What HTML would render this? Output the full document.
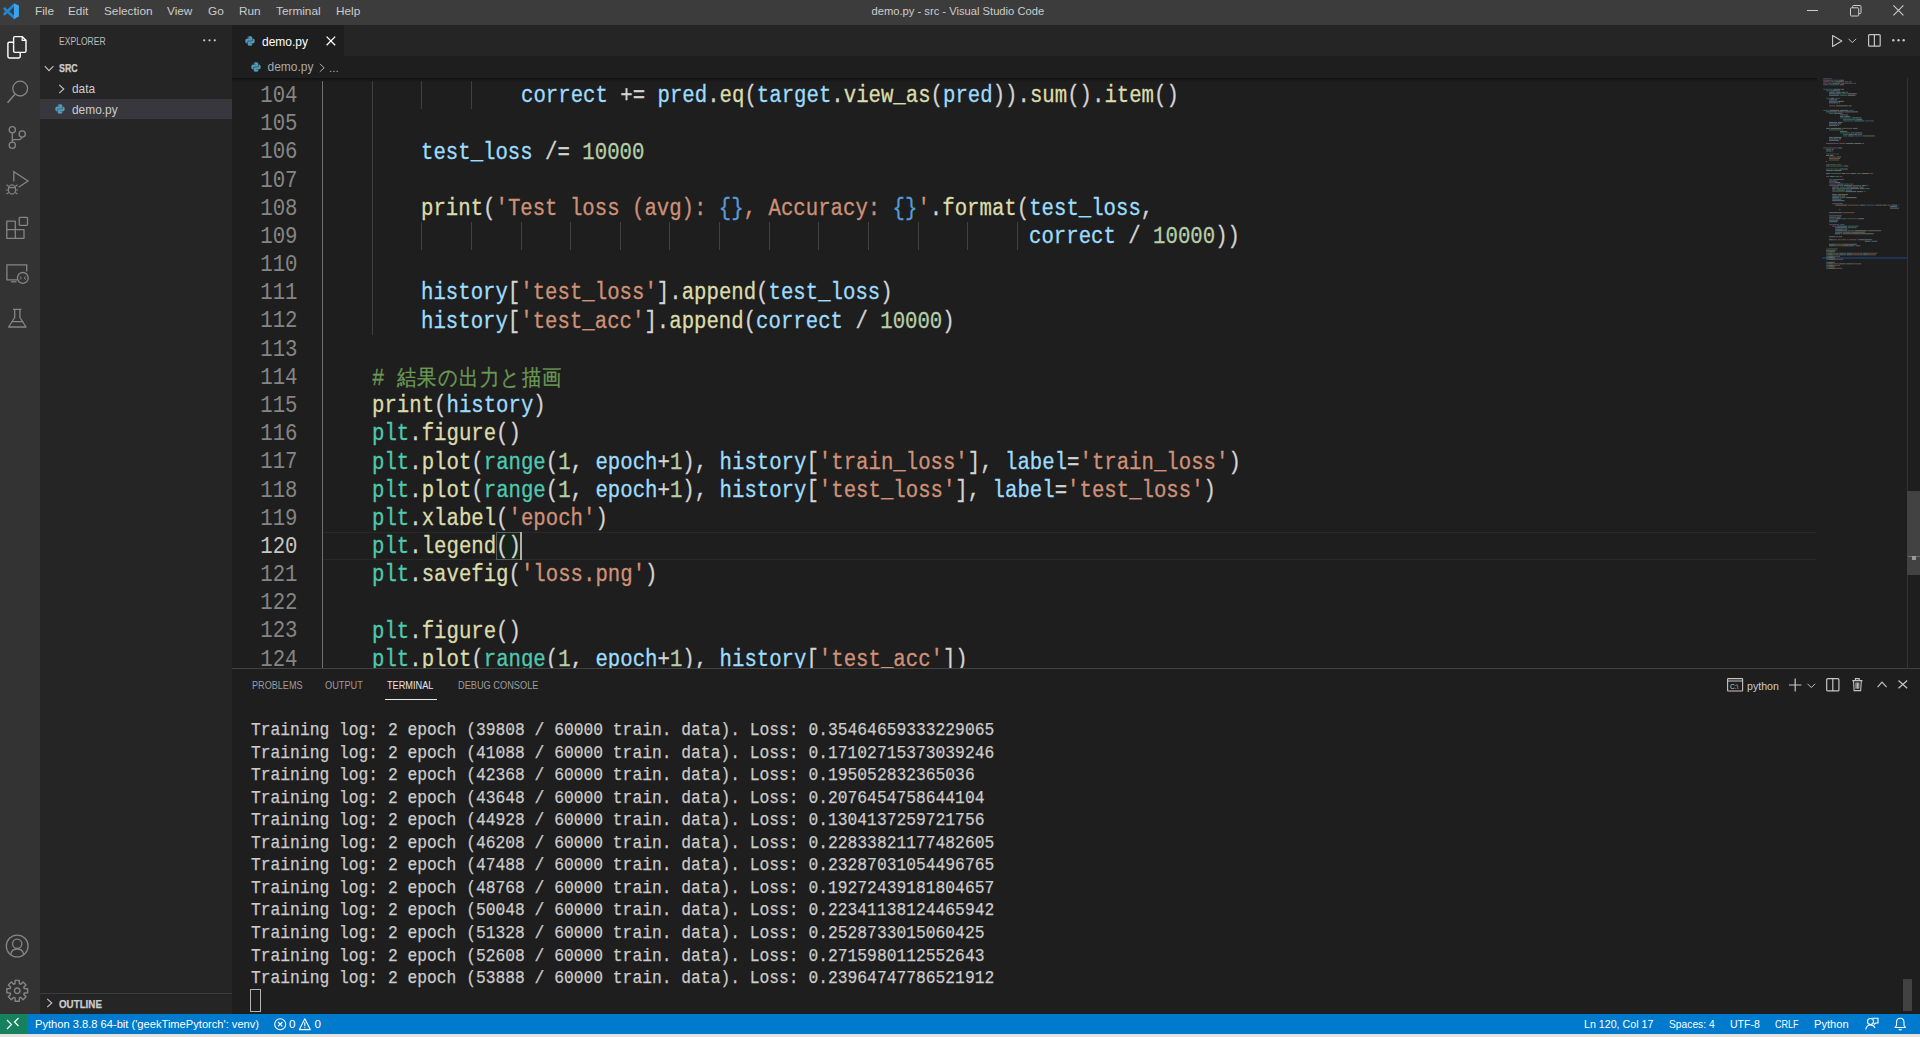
<!DOCTYPE html>
<html><head><meta charset="utf-8">
<style>
*{margin:0;padding:0;box-sizing:border-box}
html,body{width:1920px;height:1037px;overflow:hidden;background:#1e1e1e;font-family:"Liberation Sans",sans-serif}
.a{position:absolute}
#title{left:0;top:0;width:1920px;height:25px;background:#3c3c3c}
.menu{position:absolute;top:3px;font-size:11.8px;color:#cccccc;line-height:16px;white-space:nowrap}
#activity{left:0;top:25px;width:40px;height:989px;background:#333333}
#sidebar{left:40px;top:25px;width:192px;height:989px;background:#252526}
#tabs{left:232px;top:25px;width:1688px;height:31px;background:#252526}
#tab{left:232px;top:25px;width:112px;height:31px;background:#1e1e1e}
#crumbs{left:232px;top:56px;width:1688px;height:22px;background:#1e1e1e}
#status{left:0;top:1014px;width:1920px;height:20px;background:#007acc}
#strip{left:0;top:1034px;width:1920px;height:3px;background:#e6e3df}
.ln{position:absolute;left:220px;width:77.5px;height:28.18px;line-height:28.18px;padding-top:0.8px;text-align:right;font-family:"Liberation Mono",monospace;font-size:23.5px;color:#858585;transform:scaleX(0.88);transform-origin:100% 0;white-space:pre}
.ln.act{color:#c6c6c6}
.ig{position:absolute;width:1px;height:28.18px;background:#404040}
.ig.iga{background:#707070}
.cl{position:absolute;height:28.18px;line-height:28.18px;padding-top:1px;font-family:"Liberation Mono",monospace;font-size:23.5px;color:#d4d4d4;transform:scaleX(0.88);transform-origin:0 0;white-space:pre;-webkit-text-stroke:0.3px currentColor}
.cjk{font-family:"Liberation Sans",sans-serif;color:#6a9955;font-size:22px;letter-spacing:1.3px}
.tl{position:absolute;left:251px;height:22.55px;line-height:22.55px;font-family:"Liberation Mono",monospace;font-size:19px;color:#cccccc;transform:scaleX(0.8577);transform-origin:0 0;white-space:pre;-webkit-text-stroke:0.25px currentColor}
.ui{position:absolute;white-space:nowrap;line-height:16px}
svg{position:absolute;overflow:visible}
</style></head><body>
<div id="title" class="a"></div>
<!-- vscode logo -->
<svg style="left:0;top:0.8px" width="22" height="22" viewBox="0 0 22 22">
<path d="M4.6 7.8 L14.4 16.8 M4.6 13 L14.4 3.6" stroke="#1f88d6" stroke-width="2.7" stroke-linecap="round"/>
<path d="M13.9 3.1 L14.9 2.7 L18.9 4.6 V15.5 L14.9 17.6 L13.9 17.2 Z" fill="#3aa5ee"/>
</svg>
<div class="menu" style="left:35px">File</div>
<div class="menu" style="left:68px">Edit</div>
<div class="menu" style="left:104px">Selection</div>
<div class="menu" style="left:167px">View</div>
<div class="menu" style="left:208px">Go</div>
<div class="menu" style="left:239px">Run</div>
<div class="menu" style="left:276px">Terminal</div>
<div class="menu" style="left:336px">Help</div>
<div class="menu" style="left:871.5px;font-size:11.2px">demo.py - src - Visual Studio Code</div>
<!-- window controls -->
<svg style="left:1807px;top:9.7px" width="12" height="2"><rect x="0" y="0" width="11" height="1" fill="#cccccc"/></svg>
<svg style="left:1850px;top:4.7px" width="12" height="12" viewBox="0 0 12 12"><rect x="0.5" y="2.8" width="8.2" height="8.2" rx="0.8" fill="none" stroke="#cccccc"/><path d="M2.7 2.8 V1.3 Q2.7 0.5 3.5 0.5 H10.2 Q11 0.5 11 1.3 V7.8 Q11 8.6 10.2 8.6 H8.7" fill="none" stroke="#cccccc"/></svg>
<svg style="left:1893px;top:4.5px" width="11" height="11" viewBox="0 0 11 11"><path d="M0.4 0.4 L10.4 10.3 M10.4 0.4 L0.4 10.3" stroke="#cccccc" stroke-width="1.1"/></svg>

<div id="activity" class="a"></div>
<!-- activity icons -->
<svg style="left:0;top:30px" width="40" height="35" viewBox="0 30 40 35">
 <path d="M13.6 44.5 V38 Q13.6 36.6 15 36.6 H22.2 L26 40.4 V51 Q26 52.4 24.6 52.4 H20.5" fill="none" stroke="#fff" stroke-width="1.4"/>
 <path d="M13.6 44.5 V51 Q13.6 52.4 15 52.4 H20.5" fill="none" stroke="#fff" stroke-width="1.4"/>
 <path d="M22.2 36.6 V40.4 H26" fill="none" stroke="#fff" stroke-width="1.2"/>
 <path d="M13.6 42.2 H9.3 Q7.9 42.2 7.9 43.6 V56.6 Q7.9 58 9.3 58 H18.8 Q20.2 58 20.2 56.6 V52.4" fill="none" stroke="#fff" stroke-width="1.4"/>
</svg>
<svg style="left:0;top:75px" width="40" height="35" viewBox="0 75 40 35">
 <circle cx="20.2" cy="88.6" r="7.4" fill="none" stroke="#858585" stroke-width="1.3"/>
 <path d="M15 94.3 L7.5 102.7" stroke="#858585" stroke-width="1.5"/>
</svg>
<svg style="left:0;top:120px" width="40" height="35" viewBox="0 120 40 35">
 <circle cx="12.3" cy="129.8" r="3.1" fill="none" stroke="#858585" stroke-width="1.3"/>
 <circle cx="22.2" cy="134" r="3.1" fill="none" stroke="#858585" stroke-width="1.3"/>
 <circle cx="12.3" cy="145.3" r="3.1" fill="none" stroke="#858585" stroke-width="1.3"/>
 <path d="M12.3 132.9 V142.2 M12.3 141 Q12.3 139.6 14 139.6 H19 Q21.5 139.6 22 137" fill="none" stroke="#858585" stroke-width="1.3"/>
</svg>
<svg style="left:0;top:165px" width="40" height="35" viewBox="0 165 40 35">
 <path d="M13.8 181.5 V171.8 L28 181 L18.6 187.3" fill="none" stroke="#858585" stroke-width="1.3" stroke-linejoin="miter"/>
 <ellipse cx="12" cy="189.5" rx="3.6" ry="4.6" fill="none" stroke="#858585" stroke-width="1.2"/>
 <path d="M8.4 187.6 H15.6 M6.5 184.8 L8.8 186.5 M17.5 184.8 L15.2 186.5 M6 190 H8.4 M15.6 190 H18 M6.5 194 L8.8 192.5 M17.5 194 L15.2 192.5" stroke="#858585" stroke-width="1.1"/>
</svg>
<svg style="left:0;top:212px" width="40" height="35" viewBox="0 212 40 35">
 <path d="M6.8 221.2 H15.3 V238.3 H6.8 Z M6.8 229.7 H24 V238.3 H15.3" fill="none" stroke="#858585" stroke-width="1.3" stroke-linejoin="round"/>
 <rect x="19.2" y="217.4" width="8.3" height="8" rx="0.8" fill="none" stroke="#858585" stroke-width="1.3"/>
</svg>
<svg style="left:0;top:257px" width="40" height="35" viewBox="0 257 40 35">
 <path d="M17 279.8 H6.9 V264.8 H26.7 V271.5" fill="none" stroke="#858585" stroke-width="1.3"/>
 <path d="M11 281.8 H16.5" stroke="#858585" stroke-width="1.3"/>
 <circle cx="22.8" cy="277.9" r="5.4" fill="none" stroke="#858585" stroke-width="1.3"/>
 <path d="M19.6 276.4 L21.6 278 L19.6 279.6 M26 276.4 L24 278 L26 279.6" fill="none" stroke="#858585" stroke-width="0.9"/>
</svg>
<svg style="left:0;top:302px" width="40" height="35" viewBox="0 302 40 35">
 <path d="M13 309.4 H21.5 M14.7 309.4 V317.5 L8.6 327 H26 L19.9 317.5 V309.4 M11.2 321.6 H23.5" fill="none" stroke="#858585" stroke-width="1.3" stroke-linejoin="round"/>
</svg>
<svg style="left:0;top:930px" width="40" height="80" viewBox="0 930 40 80">
 <circle cx="17.2" cy="946" r="10.9" fill="none" stroke="#858585" stroke-width="1.3"/>
 <circle cx="17.2" cy="943.8" r="4.6" fill="none" stroke="#858585" stroke-width="1.3"/>
 <path d="M10.8 953.8 Q12 949 17.2 949 Q22.4 949 23.6 953.8" fill="none" stroke="#858585" stroke-width="1.3"/>
 <g transform="translate(17.2 990.8)">
 <path d="M-2.16 -7.08 L-2.11 -10.39 L2.11 -10.39 L2.16 -7.08 L3.47 -6.53 L5.85 -8.84 L8.84 -5.85 L6.53 -3.47 L7.08 -2.16 L10.39 -2.11 L10.39 2.11 L7.08 2.16 L6.53 3.47 L8.84 5.85 L5.85 8.84 L3.47 6.53 L2.16 7.08 L2.11 10.39 L-2.11 10.39 L-2.16 7.08 L-3.47 6.53 L-5.85 8.84 L-8.84 5.85 L-6.53 3.47 L-7.08 2.16 L-10.39 2.11 L-10.39 -2.11 L-7.08 -2.16 L-6.53 -3.47 L-8.84 -5.85 L-5.85 -8.84 L-3.47 -6.53 Z" fill="none" stroke="#858585" stroke-width="1.4" stroke-linejoin="round"/>
 <circle cx="0" cy="0" r="2.8" fill="none" stroke="#858585" stroke-width="1.4"/>
 </g>
</svg>

<div id="sidebar" class="a"></div>
<div class="ui" style="left:58.5px;top:33px;font-size:10.6px;color:#bbbbbb;transform:scaleX(0.81);transform-origin:0 0">EXPLORER</div>
<svg style="left:203px;top:39px" width="14" height="3"><circle cx="1.2" cy="1.3" r="1.1" fill="#cccccc"/><circle cx="6.5" cy="1.3" r="1.1" fill="#cccccc"/><circle cx="11.8" cy="1.3" r="1.1" fill="#cccccc"/></svg>
<svg style="left:44px;top:64.6px" width="11" height="8" viewBox="0 0 11 8"><path d="M0.8 1.2 L5 5.6 L9.4 1.2" fill="none" stroke="#c5c5c5" stroke-width="1.1"/></svg>
<div class="ui" style="left:58.5px;top:61px;font-size:10.3px;font-weight:bold;color:#cccccc;transform:scaleX(0.86);transform-origin:0 0;-webkit-text-stroke:0.25px #cccccc">SRC</div>
<svg style="left:58px;top:84px" width="8" height="11" viewBox="0 0 8 11"><path d="M1.2 0.8 L5.8 5 L1.2 9.2" fill="none" stroke="#c5c5c5" stroke-width="1.1"/></svg>
<div class="ui" style="left:72px;top:80.7px;font-size:11.9px;color:#cccccc">data</div>
<div class="a" style="left:40px;top:99px;width:192px;height:20px;background:#37373d"></div>
<svg style="left:55px;top:104px" width="10" height="10" viewBox="0 0 10 10" id="py1"><path d="M4.9 0.3 C2.6 0.3 2.7 1.3 2.7 1.3 V2.4 H5 V2.8 H1.8 C1.8 2.8 0.3 2.6 0.3 5 C0.3 7.3 1.6 7.2 1.6 7.2 H2.4 V6.1 C2.4 6.1 2.3 4.8 3.7 4.8 H6 C6 4.8 7.3 4.8 7.3 3.5 V1.5 C7.3 1.5 7.5 0.3 4.9 0.3 Z M3.6 1 A0.4 0.4 0 1 1 3.6 1.8 A0.4 0.4 0 1 1 3.6 1" fill="#519aba"/><path d="M5.1 9.7 C7.4 9.7 7.3 8.7 7.3 8.7 V7.6 H5 V7.2 H8.2 C8.2 7.2 9.7 7.4 9.7 5 C9.7 2.7 8.4 2.8 8.4 2.8 H7.6 V3.9 C7.6 3.9 7.7 5.2 6.3 5.2 H4 C4 5.2 2.7 5.2 2.7 6.5 V8.5 C2.7 8.5 2.5 9.7 5.1 9.7 Z" fill="#519aba"/></svg>
<div class="ui" style="left:72px;top:101.5px;font-size:11.9px;color:#cccccc">demo.py</div>
<div class="a" style="left:40px;top:993px;width:192px;height:1px;background:#3c3c3c"></div>
<svg style="left:46px;top:998px" width="8" height="11" viewBox="0 0 8 11"><path d="M1.2 0.8 L5.8 5 L1.2 9.2" fill="none" stroke="#c5c5c5" stroke-width="1.1"/></svg>
<div class="ui" style="left:58.5px;top:997px;font-size:10.3px;font-weight:bold;color:#cccccc;transform:scaleX(0.95);transform-origin:0 0;-webkit-text-stroke:0.25px #cccccc">OUTLINE</div>

<!-- editor -->
<div id="tabs" class="a"></div>
<div id="tab" class="a"></div>
<svg style="left:245px;top:35.5px" width="10" height="10" viewBox="0 0 10 10"><use href="#py1"/></svg>
<div class="ui" style="left:262px;top:33.8px;font-size:12px;color:#ffffff">demo.py</div>
<svg style="left:326px;top:36px" width="10" height="10" viewBox="0 0 10 10"><path d="M0.6 0.6 L9.2 9.2 M9.2 0.6 L0.6 9.2" stroke="#ffffff" stroke-width="1.3"/></svg>
<!-- editor actions -->
<svg style="left:1832px;top:35px" width="11" height="13" viewBox="0 0 11 13"><path d="M0.6 0.6 L9.8 6 L0.6 11.4 Z" fill="none" stroke="#c5c5c5" stroke-width="1.15" stroke-linejoin="round"/></svg>
<svg style="left:1848px;top:38px" width="9" height="6" viewBox="0 0 9 6"><path d="M0.5 0.8 L4.3 4.6 L8.1 0.8" fill="none" stroke="#c5c5c5" stroke-width="1"/></svg>
<svg style="left:1868px;top:34px" width="13" height="13" viewBox="0 0 13 13"><rect x="0.6" y="0.6" width="11.6" height="11.6" rx="0.9" fill="none" stroke="#c5c5c5" stroke-width="1.2"/><path d="M6.4 0.6 V12.2" stroke="#c5c5c5" stroke-width="1.2"/></svg>
<svg style="left:1892px;top:39px" width="13" height="3"><circle cx="1.3" cy="1.3" r="1.2" fill="#c5c5c5"/><circle cx="6.5" cy="1.3" r="1.2" fill="#c5c5c5"/><circle cx="11.7" cy="1.3" r="1.2" fill="#c5c5c5"/></svg>

<div id="crumbs" class="a"></div>
<svg style="left:250.5px;top:62px" width="10" height="10" viewBox="0 0 10 10"><use href="#py1"/></svg>
<div class="ui" style="left:267.5px;top:59px;font-size:12px;color:#a9a9a9">demo.py</div>
<svg style="left:319px;top:62.5px" width="7" height="10" viewBox="0 0 7 10"><path d="M0.8 0.8 L5.2 4.8 L0.8 8.8" fill="none" stroke="#a9a9a9" stroke-width="1"/></svg>
<div class="ui" style="left:329px;top:59.5px;font-size:11.6px;color:#a9a9a9">...</div>

<!-- current line highlight -->
<div class="a" style="left:322px;top:532.3px;width:1495px;height:27.5px;border-top:1px solid #282828;border-bottom:1px solid #282828"></div>
<!-- bracket match -->
<div class="a" style="left:495.5px;top:532.3px;width:26px;height:27.8px;background:#15251a;border:1px solid #5c5c5c"></div>

<div class="a" style="left:0;top:0;width:1817px;height:668px;overflow:hidden">
<div class="ln" style="top:81.20px">104</div>
<div class="ig iga" style="left:322.00px;top:81.20px"></div>
<div class="ig" style="left:371.64px;top:81.20px"></div>
<div class="ig" style="left:421.28px;top:81.20px"></div>
<div class="ig" style="left:470.92px;top:81.20px"></div>
<div class="cl" style="left:520.56px;top:81.20px"><span style="color:#9cdcfe">correct</span><span style="color:#d4d4d4"> += </span><span style="color:#9cdcfe">pred</span><span style="color:#d4d4d4">.</span><span style="color:#dcdcaa">eq</span><span style="color:#d4d4d4">(</span><span style="color:#9cdcfe">target</span><span style="color:#d4d4d4">.</span><span style="color:#dcdcaa">view_as</span><span style="color:#d4d4d4">(</span><span style="color:#9cdcfe">pred</span><span style="color:#d4d4d4">))</span><span style="color:#d4d4d4">.</span><span style="color:#dcdcaa">sum</span><span style="color:#d4d4d4">().</span><span style="color:#dcdcaa">item</span><span style="color:#d4d4d4">()</span></div>
<div class="ln" style="top:109.38px">105</div>
<div class="ig iga" style="left:322.00px;top:109.38px"></div>
<div class="ig" style="left:371.64px;top:109.38px"></div>
<div class="ln" style="top:137.56px">106</div>
<div class="ig iga" style="left:322.00px;top:137.56px"></div>
<div class="ig" style="left:371.64px;top:137.56px"></div>
<div class="cl" style="left:421.28px;top:137.56px"><span style="color:#9cdcfe">test_loss</span><span style="color:#d4d4d4"> /= </span><span style="color:#b5cea8">10000</span></div>
<div class="ln" style="top:165.74px">107</div>
<div class="ig iga" style="left:322.00px;top:165.74px"></div>
<div class="ig" style="left:371.64px;top:165.74px"></div>
<div class="ln" style="top:193.92px">108</div>
<div class="ig iga" style="left:322.00px;top:193.92px"></div>
<div class="ig" style="left:371.64px;top:193.92px"></div>
<div class="cl" style="left:421.28px;top:193.92px"><span style="color:#dcdcaa">print</span><span style="color:#d4d4d4">(</span><span style="color:#ce9178">&#x27;Test loss (avg): </span><span style="color:#569cd6">{}</span><span style="color:#ce9178">, Accuracy: </span><span style="color:#569cd6">{}</span><span style="color:#ce9178">&#x27;</span><span style="color:#d4d4d4">.</span><span style="color:#dcdcaa">format</span><span style="color:#d4d4d4">(</span><span style="color:#9cdcfe">test_loss</span><span style="color:#d4d4d4">,</span></div>
<div class="ln" style="top:222.10px">109</div>
<div class="ig iga" style="left:322.00px;top:222.10px"></div>
<div class="ig" style="left:371.64px;top:222.10px"></div>
<div class="ig" style="left:421.28px;top:222.10px"></div>
<div class="ig" style="left:470.92px;top:222.10px"></div>
<div class="ig" style="left:520.56px;top:222.10px"></div>
<div class="ig" style="left:570.20px;top:222.10px"></div>
<div class="ig" style="left:619.84px;top:222.10px"></div>
<div class="ig" style="left:669.48px;top:222.10px"></div>
<div class="ig" style="left:719.12px;top:222.10px"></div>
<div class="ig" style="left:768.76px;top:222.10px"></div>
<div class="ig" style="left:818.40px;top:222.10px"></div>
<div class="ig" style="left:868.04px;top:222.10px"></div>
<div class="ig" style="left:917.68px;top:222.10px"></div>
<div class="ig" style="left:967.32px;top:222.10px"></div>
<div class="ig" style="left:1016.96px;top:222.10px"></div>
<div class="cl" style="left:1029.37px;top:222.10px"><span style="color:#9cdcfe">correct</span><span style="color:#d4d4d4"> / </span><span style="color:#b5cea8">10000</span><span style="color:#d4d4d4">))</span></div>
<div class="ln" style="top:250.28px">110</div>
<div class="ig iga" style="left:322.00px;top:250.28px"></div>
<div class="ig" style="left:371.64px;top:250.28px"></div>
<div class="ln" style="top:278.46px">111</div>
<div class="ig iga" style="left:322.00px;top:278.46px"></div>
<div class="ig" style="left:371.64px;top:278.46px"></div>
<div class="cl" style="left:421.28px;top:278.46px"><span style="color:#9cdcfe">history</span><span style="color:#d4d4d4">[</span><span style="color:#ce9178">&#x27;test_loss&#x27;</span><span style="color:#d4d4d4">]</span><span style="color:#d4d4d4">.</span><span style="color:#dcdcaa">append</span><span style="color:#d4d4d4">(</span><span style="color:#9cdcfe">test_loss</span><span style="color:#d4d4d4">)</span></div>
<div class="ln" style="top:306.64px">112</div>
<div class="ig iga" style="left:322.00px;top:306.64px"></div>
<div class="ig" style="left:371.64px;top:306.64px"></div>
<div class="cl" style="left:421.28px;top:306.64px"><span style="color:#9cdcfe">history</span><span style="color:#d4d4d4">[</span><span style="color:#ce9178">&#x27;test_acc&#x27;</span><span style="color:#d4d4d4">]</span><span style="color:#d4d4d4">.</span><span style="color:#dcdcaa">append</span><span style="color:#d4d4d4">(</span><span style="color:#9cdcfe">correct</span><span style="color:#d4d4d4"> / </span><span style="color:#b5cea8">10000</span><span style="color:#d4d4d4">)</span></div>
<div class="ln" style="top:334.82px">113</div>
<div class="ig iga" style="left:322.00px;top:334.82px"></div>
<div class="ln" style="top:363.00px">114</div>
<div class="ig iga" style="left:322.00px;top:363.00px"></div>
<div class="cl" style="left:371.64px;top:363.00px"><span style="color:#6a9955"># </span><span class="cjk">結果の出力と描画</span></div>
<div class="ln" style="top:391.18px">115</div>
<div class="ig iga" style="left:322.00px;top:391.18px"></div>
<div class="cl" style="left:371.64px;top:391.18px"><span style="color:#dcdcaa">print</span><span style="color:#d4d4d4">(</span><span style="color:#9cdcfe">history</span><span style="color:#d4d4d4">)</span></div>
<div class="ln" style="top:419.36px">116</div>
<div class="ig iga" style="left:322.00px;top:419.36px"></div>
<div class="cl" style="left:371.64px;top:419.36px"><span style="color:#4ec9b0">plt</span><span style="color:#d4d4d4">.</span><span style="color:#dcdcaa">figure</span><span style="color:#d4d4d4">()</span></div>
<div class="ln" style="top:447.54px">117</div>
<div class="ig iga" style="left:322.00px;top:447.54px"></div>
<div class="cl" style="left:371.64px;top:447.54px"><span style="color:#4ec9b0">plt</span><span style="color:#d4d4d4">.</span><span style="color:#dcdcaa">plot</span><span style="color:#d4d4d4">(</span><span style="color:#4ec9b0">range</span><span style="color:#d4d4d4">(</span><span style="color:#b5cea8">1</span><span style="color:#d4d4d4">, </span><span style="color:#9cdcfe">epoch</span><span style="color:#d4d4d4">+</span><span style="color:#b5cea8">1</span><span style="color:#d4d4d4">), </span><span style="color:#9cdcfe">history</span><span style="color:#d4d4d4">[</span><span style="color:#ce9178">&#x27;train_loss&#x27;</span><span style="color:#d4d4d4">], </span><span style="color:#9cdcfe">label</span><span style="color:#d4d4d4">=</span><span style="color:#ce9178">&#x27;train_loss&#x27;</span><span style="color:#d4d4d4">)</span></div>
<div class="ln" style="top:475.72px">118</div>
<div class="ig iga" style="left:322.00px;top:475.72px"></div>
<div class="cl" style="left:371.64px;top:475.72px"><span style="color:#4ec9b0">plt</span><span style="color:#d4d4d4">.</span><span style="color:#dcdcaa">plot</span><span style="color:#d4d4d4">(</span><span style="color:#4ec9b0">range</span><span style="color:#d4d4d4">(</span><span style="color:#b5cea8">1</span><span style="color:#d4d4d4">, </span><span style="color:#9cdcfe">epoch</span><span style="color:#d4d4d4">+</span><span style="color:#b5cea8">1</span><span style="color:#d4d4d4">), </span><span style="color:#9cdcfe">history</span><span style="color:#d4d4d4">[</span><span style="color:#ce9178">&#x27;test_loss&#x27;</span><span style="color:#d4d4d4">], </span><span style="color:#9cdcfe">label</span><span style="color:#d4d4d4">=</span><span style="color:#ce9178">&#x27;test_loss&#x27;</span><span style="color:#d4d4d4">)</span></div>
<div class="ln" style="top:503.90px">119</div>
<div class="ig iga" style="left:322.00px;top:503.90px"></div>
<div class="cl" style="left:371.64px;top:503.90px"><span style="color:#4ec9b0">plt</span><span style="color:#d4d4d4">.</span><span style="color:#dcdcaa">xlabel</span><span style="color:#d4d4d4">(</span><span style="color:#ce9178">&#x27;epoch&#x27;</span><span style="color:#d4d4d4">)</span></div>
<div class="ln act" style="top:532.08px">120</div>
<div class="ig iga" style="left:322.00px;top:532.08px"></div>
<div class="cl" style="left:371.64px;top:532.08px"><span style="color:#4ec9b0">plt</span><span style="color:#d4d4d4">.</span><span style="color:#dcdcaa">legend</span><span style="color:#d4d4d4">()</span></div>
<div class="ln" style="top:560.26px">121</div>
<div class="ig iga" style="left:322.00px;top:560.26px"></div>
<div class="cl" style="left:371.64px;top:560.26px"><span style="color:#4ec9b0">plt</span><span style="color:#d4d4d4">.</span><span style="color:#dcdcaa">savefig</span><span style="color:#d4d4d4">(</span><span style="color:#ce9178">&#x27;loss.png&#x27;</span><span style="color:#d4d4d4">)</span></div>
<div class="ln" style="top:588.44px">122</div>
<div class="ig iga" style="left:322.00px;top:588.44px"></div>
<div class="ln" style="top:616.62px">123</div>
<div class="ig iga" style="left:322.00px;top:616.62px"></div>
<div class="cl" style="left:371.64px;top:616.62px"><span style="color:#4ec9b0">plt</span><span style="color:#d4d4d4">.</span><span style="color:#dcdcaa">figure</span><span style="color:#d4d4d4">()</span></div>
<div class="ln" style="top:644.80px">124</div>
<div class="ig iga" style="left:322.00px;top:644.80px"></div>
<div class="cl" style="left:371.64px;top:644.80px"><span style="color:#4ec9b0">plt</span><span style="color:#d4d4d4">.</span><span style="color:#dcdcaa">plot</span><span style="color:#d4d4d4">(</span><span style="color:#4ec9b0">range</span><span style="color:#d4d4d4">(</span><span style="color:#b5cea8">1</span><span style="color:#d4d4d4">, </span><span style="color:#9cdcfe">epoch</span><span style="color:#d4d4d4">+</span><span style="color:#b5cea8">1</span><span style="color:#d4d4d4">), </span><span style="color:#9cdcfe">history</span><span style="color:#d4d4d4">[</span><span style="color:#ce9178">&#x27;test_acc&#x27;</span><span style="color:#d4d4d4">])</span></div>
</div>
<!-- scroll shadow -->
<div class="a" style="left:232px;top:78px;width:1585px;height:4px;background:linear-gradient(#111111,rgba(30,30,30,0))"></div>


<!-- cursor -->
<div class="a" style="left:519.8px;top:532.3px;width:2px;height:27.8px;background:#aeafad"></div>

<!-- minimap placeholder -->
<div class="a" style="left:1822px;top:257.2px;width:85px;height:1.5px;background:#1b3652"></div>
<svg style="left:0;top:0" width="1920" height="1037" viewBox="0 0 1920 1037"><g opacity="0.4"><rect x="1823.20" y="78.26" width="6.56" height="1.0" fill="#c586c0"/><rect x="1830.49" y="78.26" width="1.39" height="1.0" fill="#4ec9b0"/><rect x="1823.20" y="79.76" width="10.16" height="1.0" fill="#c586c0"/><rect x="1834.09" y="79.76" width="3.80" height="1.0" fill="#4ec9b0"/><rect x="1838.61" y="79.76" width="5.32" height="1.0" fill="#d4d4d4"/><rect x="1823.20" y="81.27" width="7.02" height="1.0" fill="#c586c0"/><rect x="1830.95" y="81.27" width="3.64" height="1.0" fill="#4ec9b0"/><rect x="1835.32" y="81.27" width="8.58" height="1.0" fill="#d4d4d4"/><rect x="1844.63" y="81.27" width="3.41" height="1.0" fill="#c586c0"/><rect x="1848.77" y="81.27" width="2.87" height="1.0" fill="#4ec9b0"/><rect x="1823.20" y="82.77" width="3.77" height="1.0" fill="#c586c0"/><rect x="1827.70" y="82.77" width="4.00" height="1.0" fill="#4ec9b0"/><rect x="1832.42" y="82.77" width="7.67" height="1.0" fill="#d4d4d4"/><rect x="1840.82" y="82.77" width="12.10" height="1.0" fill="#c586c0"/><rect x="1853.65" y="82.77" width="2.34" height="1.0" fill="#4ec9b0"/><rect x="1823.20" y="84.28" width="5.46" height="1.0" fill="#c586c0"/><rect x="1829.38" y="84.28" width="9.90" height="1.0" fill="#4ec9b0"/><rect x="1840.01" y="84.28" width="3.92" height="1.0" fill="#d4d4d4"/><rect x="1823.20" y="88.79" width="9.35" height="1.0" fill="#569cd6"/><rect x="1833.27" y="88.79" width="7.36" height="1.0" fill="#9cdcfe"/><rect x="1841.37" y="88.79" width="2.56" height="1.0" fill="#d4d4d4"/><rect x="1826.09" y="90.30" width="3.51" height="1.0" fill="#569cd6"/><rect x="1830.33" y="90.30" width="9.74" height="1.0" fill="#9cdcfe"/><rect x="1828.98" y="91.80" width="6.19" height="1.0" fill="#9cdcfe"/><rect x="1835.90" y="91.80" width="4.59" height="1.0" fill="#d4d4d4"/><rect x="1841.22" y="91.80" width="4.30" height="1.0" fill="#9cdcfe"/><rect x="1846.24" y="91.80" width="1.55" height="1.0" fill="#d4d4d4"/><rect x="1828.98" y="93.31" width="11.98" height="1.0" fill="#9cdcfe"/><rect x="1841.69" y="93.31" width="4.99" height="1.0" fill="#4ec9b0"/><rect x="1847.41" y="93.31" width="9.40" height="1.0" fill="#d4d4d4"/><rect x="1828.98" y="94.81" width="10.03" height="1.0" fill="#9cdcfe"/><rect x="1839.74" y="94.81" width="7.10" height="1.0" fill="#4ec9b0"/><rect x="1847.57" y="94.81" width="7.93" height="1.0" fill="#d4d4d4"/><rect x="1826.09" y="97.82" width="3.69" height="1.0" fill="#569cd6"/><rect x="1830.51" y="97.82" width="3.66" height="1.0" fill="#dcdcaa"/><rect x="1834.90" y="97.82" width="5.27" height="1.0" fill="#569cd6"/><rect x="1828.98" y="99.32" width="8.20" height="1.0" fill="#9cdcfe"/><rect x="1828.98" y="100.83" width="7.70" height="1.0" fill="#9cdcfe"/><rect x="1837.42" y="100.83" width="6.46" height="1.0" fill="#dcdcaa"/><rect x="1828.98" y="102.33" width="9.44" height="1.0" fill="#9cdcfe"/><rect x="1839.15" y="102.33" width="0.92" height="1.0" fill="#d4d4d4"/><rect x="1828.98" y="105.34" width="6.30" height="1.0" fill="#c586c0"/><rect x="1836.01" y="105.34" width="11.74" height="1.0" fill="#dcdcaa"/><rect x="1848.48" y="105.34" width="3.17" height="1.0" fill="#9cdcfe"/><rect x="1823.20" y="109.85" width="5.69" height="1.0" fill="#569cd6"/><rect x="1829.61" y="109.85" width="9.32" height="1.0" fill="#dcdcaa"/><rect x="1839.66" y="109.85" width="8.78" height="1.0" fill="#9cdcfe"/><rect x="1849.17" y="109.85" width="4.41" height="1.0" fill="#569cd6"/><rect x="1826.09" y="111.36" width="11.02" height="1.0" fill="#9cdcfe"/><rect x="1837.84" y="111.36" width="6.17" height="1.0" fill="#dcdcaa"/><rect x="1844.74" y="111.36" width="13.17" height="1.0" fill="#d4d4d4"/><rect x="1828.98" y="112.86" width="4.30" height="1.0" fill="#4ec9b0"/><rect x="1834.01" y="112.86" width="7.60" height="1.0" fill="#9cdcfe"/><rect x="1842.34" y="112.86" width="0.62" height="1.0" fill="#4ec9b0"/><rect x="1840.07" y="114.37" width="4.67" height="1.0" fill="#9cdcfe"/><rect x="1845.47" y="114.37" width="2.31" height="1.0" fill="#d4d4d4"/><rect x="1840.07" y="115.87" width="3.43" height="1.0" fill="#9cdcfe"/><rect x="1844.23" y="115.87" width="5.48" height="1.0" fill="#d4d4d4"/><rect x="1840.07" y="117.38" width="11.41" height="1.0" fill="#4ec9b0"/><rect x="1852.21" y="117.38" width="9.30" height="1.0" fill="#9cdcfe"/><rect x="1842.97" y="118.88" width="12.63" height="1.0" fill="#4ec9b0"/><rect x="1856.33" y="118.88" width="5.93" height="1.0" fill="#9cdcfe"/><rect x="1842.97" y="120.39" width="10.65" height="1.0" fill="#4ec9b0"/><rect x="1854.34" y="120.39" width="9.54" height="1.0" fill="#9cdcfe"/><rect x="1864.61" y="120.39" width="9.38" height="1.0" fill="#569cd6"/><rect x="1828.98" y="121.89" width="8.02" height="1.0" fill="#9cdcfe"/><rect x="1837.73" y="121.89" width="4.75" height="1.0" fill="#d4d4d4"/><rect x="1828.98" y="123.40" width="12.05" height="1.0" fill="#9cdcfe"/><rect x="1828.98" y="124.90" width="8.22" height="1.0" fill="#9cdcfe"/><rect x="1837.93" y="124.90" width="1.18" height="1.0" fill="#9cdcfe"/><rect x="1826.09" y="127.91" width="3.67" height="1.0" fill="#9cdcfe"/><rect x="1830.49" y="127.91" width="10.72" height="1.0" fill="#dcdcaa"/><rect x="1841.93" y="127.91" width="10.12" height="1.0" fill="#ce9178"/><rect x="1852.78" y="127.91" width="4.65" height="1.0" fill="#9cdcfe"/><rect x="1828.98" y="129.41" width="12.04" height="1.0" fill="#4ec9b0"/><rect x="1841.75" y="129.41" width="1.21" height="1.0" fill="#9cdcfe"/><rect x="1840.07" y="130.92" width="7.24" height="1.0" fill="#9cdcfe"/><rect x="1840.07" y="132.42" width="10.36" height="1.0" fill="#4ec9b0"/><rect x="1851.16" y="132.42" width="3.25" height="1.0" fill="#9cdcfe"/><rect x="1855.14" y="132.42" width="7.12" height="1.0" fill="#d4d4d4"/><rect x="1842.97" y="133.93" width="4.85" height="1.0" fill="#4ec9b0"/><rect x="1848.54" y="133.93" width="4.29" height="1.0" fill="#9cdcfe"/><rect x="1853.56" y="133.93" width="3.65" height="1.0" fill="#d4d4d4"/><rect x="1857.94" y="133.93" width="4.31" height="1.0" fill="#4ec9b0"/><rect x="1842.97" y="135.43" width="4.42" height="1.0" fill="#4ec9b0"/><rect x="1848.12" y="135.43" width="5.72" height="1.0" fill="#9cdcfe"/><rect x="1854.57" y="135.43" width="7.30" height="1.0" fill="#569cd6"/><rect x="1862.60" y="135.43" width="12.19" height="1.0" fill="#b5cea8"/><rect x="1828.98" y="136.94" width="3.89" height="1.0" fill="#9cdcfe"/><rect x="1833.60" y="136.94" width="7.94" height="1.0" fill="#d4d4d4"/><rect x="1828.98" y="138.44" width="9.04" height="1.0" fill="#9cdcfe"/><rect x="1838.76" y="138.44" width="2.28" height="1.0" fill="#d4d4d4"/><rect x="1828.98" y="139.94" width="10.13" height="1.0" fill="#9cdcfe"/><rect x="1826.09" y="142.95" width="12.50" height="1.0" fill="#c586c0"/><rect x="1839.32" y="142.95" width="6.06" height="1.0" fill="#ce9178"/><rect x="1846.12" y="142.95" width="7.57" height="1.0" fill="#9cdcfe"/><rect x="1854.41" y="142.95" width="6.95" height="1.0" fill="#d4d4d4"/><rect x="1862.09" y="142.95" width="2.09" height="1.0" fill="#c586c0"/><rect x="1823.20" y="147.47" width="13.54" height="1.0" fill="#c586c0"/><rect x="1837.46" y="147.47" width="4.54" height="1.0" fill="#9cdcfe"/><rect x="1826.09" y="148.97" width="4.94" height="1.0" fill="#4ec9b0"/><rect x="1831.76" y="148.97" width="1.56" height="1.0" fill="#9cdcfe"/><rect x="1826.09" y="150.48" width="5.57" height="1.0" fill="#9cdcfe"/><rect x="1832.39" y="150.48" width="0.94" height="1.0" fill="#d4d4d4"/><rect x="1826.09" y="153.48" width="9.48" height="1.0" fill="#6a9955"/><rect x="1836.30" y="153.48" width="2.81" height="1.0" fill="#6a9955"/><rect x="1826.09" y="154.99" width="3.05" height="1.0" fill="#9cdcfe"/><rect x="1829.86" y="154.99" width="3.46" height="1.0" fill="#d4d4d4"/><rect x="1828.98" y="156.49" width="7.06" height="1.0" fill="#ce9178"/><rect x="1836.77" y="156.49" width="4.26" height="1.0" fill="#9cdcfe"/><rect x="1828.98" y="158.00" width="11.09" height="1.0" fill="#ce9178"/><rect x="1828.98" y="159.50" width="10.13" height="1.0" fill="#ce9178"/><rect x="1826.09" y="161.01" width="0.96" height="1.0" fill="#d4d4d4"/><rect x="1826.09" y="164.02" width="9.79" height="1.0" fill="#6a9955"/><rect x="1836.61" y="164.02" width="4.42" height="1.0" fill="#6a9955"/><rect x="1826.09" y="165.52" width="3.59" height="1.0" fill="#9cdcfe"/><rect x="1830.41" y="165.52" width="12.89" height="1.0" fill="#4ec9b0"/><rect x="1844.04" y="165.52" width="4.23" height="1.0" fill="#d4d4d4"/><rect x="1826.09" y="168.53" width="12.62" height="1.0" fill="#6a9955"/><rect x="1839.44" y="168.53" width="8.35" height="1.0" fill="#9cdcfe"/><rect x="1826.09" y="170.03" width="7.32" height="1.0" fill="#9cdcfe"/><rect x="1834.14" y="170.03" width="7.39" height="1.0" fill="#d4d4d4"/><rect x="1826.09" y="173.04" width="4.14" height="1.0" fill="#9cdcfe"/><rect x="1830.96" y="173.04" width="9.98" height="1.0" fill="#4ec9b0"/><rect x="1841.67" y="173.04" width="3.68" height="1.0" fill="#dcdcaa"/><rect x="1846.08" y="173.04" width="3.74" height="1.0" fill="#ce9178"/><rect x="1850.55" y="173.04" width="5.30" height="1.0" fill="#9cdcfe"/><rect x="1856.58" y="173.04" width="4.79" height="1.0" fill="#4ec9b0"/><rect x="1862.09" y="173.04" width="6.74" height="1.0" fill="#dcdcaa"/><rect x="1869.56" y="173.04" width="3.30" height="1.0" fill="#ce9178"/><rect x="1826.14" y="176.05" width="3.00" height="1.0" fill="#c586c0"/><rect x="1829.88" y="176.05" width="4.66" height="1.0" fill="#9cdcfe"/><rect x="1835.27" y="176.05" width="4.12" height="1.0" fill="#4ec9b0"/><rect x="1840.12" y="176.05" width="2.24" height="1.0" fill="#c586c0"/><rect x="1829.18" y="179.06" width="3.28" height="1.0" fill="#6a9955"/><rect x="1833.19" y="179.06" width="10.68" height="1.0" fill="#ce9178"/><rect x="1829.18" y="180.57" width="8.11" height="1.0" fill="#9cdcfe"/><rect x="1829.18" y="182.07" width="4.63" height="1.0" fill="#6a9955"/><rect x="1834.55" y="182.07" width="5.77" height="1.0" fill="#9cdcfe"/><rect x="1829.18" y="183.58" width="6.82" height="1.0" fill="#c586c0"/><rect x="1836.74" y="183.58" width="7.01" height="1.0" fill="#9cdcfe"/><rect x="1844.47" y="183.58" width="4.35" height="1.0" fill="#4ec9b0"/><rect x="1849.55" y="183.58" width="3.95" height="1.0" fill="#c586c0"/><rect x="1829.18" y="185.08" width="13.92" height="1.0" fill="#c586c0"/><rect x="1843.84" y="185.08" width="8.13" height="1.0" fill="#9cdcfe"/><rect x="1852.69" y="185.08" width="8.32" height="1.0" fill="#4ec9b0"/><rect x="1861.75" y="185.08" width="3.94" height="1.0" fill="#dcdcaa"/><rect x="1866.42" y="185.08" width="1.77" height="1.0" fill="#c586c0"/><rect x="1832.22" y="186.58" width="6.77" height="1.0" fill="#9cdcfe"/><rect x="1839.72" y="186.58" width="5.91" height="1.0" fill="#4ec9b0"/><rect x="1846.37" y="186.58" width="12.12" height="1.0" fill="#d4d4d4"/><rect x="1859.21" y="186.58" width="4.42" height="1.0" fill="#9cdcfe"/><rect x="1832.22" y="188.09" width="3.25" height="1.0" fill="#9cdcfe"/><rect x="1836.21" y="188.09" width="13.46" height="1.0" fill="#4ec9b0"/><rect x="1850.40" y="188.09" width="8.81" height="1.0" fill="#d4d4d4"/><rect x="1859.94" y="188.09" width="4.61" height="1.0" fill="#9cdcfe"/><rect x="1865.28" y="188.09" width="4.43" height="1.0" fill="#4ec9b0"/><rect x="1832.22" y="189.59" width="3.30" height="1.0" fill="#9cdcfe"/><rect x="1836.25" y="189.59" width="8.81" height="1.0" fill="#d4d4d4"/><rect x="1845.79" y="189.59" width="6.19" height="1.0" fill="#9cdcfe"/><rect x="1832.22" y="191.10" width="12.50" height="1.0" fill="#6a9955"/><rect x="1845.45" y="191.10" width="10.66" height="1.0" fill="#9cdcfe"/><rect x="1856.84" y="191.10" width="5.87" height="1.0" fill="#d4d4d4"/><rect x="1863.44" y="191.10" width="2.22" height="1.0" fill="#6a9955"/><rect x="1832.22" y="194.11" width="4.84" height="1.0" fill="#9cdcfe"/><rect x="1837.79" y="194.11" width="10.14" height="1.0" fill="#dcdcaa"/><rect x="1832.22" y="195.61" width="8.86" height="1.0" fill="#9cdcfe"/><rect x="1841.81" y="195.61" width="3.58" height="1.0" fill="#dcdcaa"/><rect x="1832.22" y="197.12" width="6.63" height="1.0" fill="#9cdcfe"/><rect x="1839.58" y="197.12" width="5.45" height="1.0" fill="#4ec9b0"/><rect x="1845.76" y="197.12" width="10.78" height="1.0" fill="#dcdcaa"/><rect x="1832.22" y="198.62" width="9.12" height="1.0" fill="#9cdcfe"/><rect x="1832.22" y="200.12" width="12.16" height="1.0" fill="#9cdcfe"/><rect x="1832.22" y="203.13" width="10.64" height="1.0" fill="#c586c0"/><rect x="1835.26" y="204.64" width="12.00" height="1.0" fill="#dcdcaa"/><rect x="1848.00" y="204.64" width="11.14" height="1.0" fill="#ce9178"/><rect x="1859.86" y="204.64" width="5.49" height="1.0" fill="#9cdcfe"/><rect x="1866.09" y="204.64" width="8.69" height="1.0" fill="#569cd6"/><rect x="1875.51" y="204.64" width="6.91" height="1.0" fill="#b5cea8"/><rect x="1883.15" y="204.64" width="3.32" height="1.0" fill="#dcdcaa"/><rect x="1887.20" y="204.64" width="3.31" height="1.0" fill="#ce9178"/><rect x="1891.24" y="204.64" width="6.07" height="1.0" fill="#9cdcfe"/><rect x="1898.04" y="204.64" width="1.05" height="1.0" fill="#569cd6"/><rect x="1889.97" y="206.14" width="7.09" height="1.0" fill="#9cdcfe"/><rect x="1889.97" y="207.65" width="9.12" height="1.0" fill="#9cdcfe"/><rect x="1839.32" y="209.15" width="1.01" height="1.0" fill="#d4d4d4"/><rect x="1829.18" y="212.16" width="13.31" height="1.0" fill="#9cdcfe"/><rect x="1843.22" y="212.16" width="11.29" height="1.0" fill="#ce9178"/><rect x="1829.18" y="215.17" width="12.66" height="1.0" fill="#c586c0"/><rect x="1829.18" y="216.67" width="7.01" height="1.0" fill="#9cdcfe"/><rect x="1836.93" y="216.67" width="3.91" height="1.0" fill="#d4d4d4"/><rect x="1829.18" y="218.18" width="5.50" height="1.0" fill="#6a9955"/><rect x="1835.41" y="218.18" width="5.16" height="1.0" fill="#9cdcfe"/><rect x="1841.30" y="218.18" width="5.25" height="1.0" fill="#4ec9b0"/><rect x="1847.28" y="218.18" width="9.86" height="1.0" fill="#6a9955"/><rect x="1857.88" y="218.18" width="6.26" height="1.0" fill="#9cdcfe"/><rect x="1829.18" y="219.68" width="9.12" height="1.0" fill="#9cdcfe"/><rect x="1829.18" y="221.19" width="8.27" height="1.0" fill="#9cdcfe"/><rect x="1829.18" y="224.20" width="10.18" height="1.0" fill="#c586c0"/><rect x="1840.10" y="224.20" width="4.28" height="1.0" fill="#4ec9b0"/><rect x="1832.22" y="225.70" width="3.93" height="1.0" fill="#c586c0"/><rect x="1836.89" y="225.70" width="10.27" height="1.0" fill="#9cdcfe"/><rect x="1847.88" y="225.70" width="10.68" height="1.0" fill="#4ec9b0"/><rect x="1835.26" y="227.21" width="11.61" height="1.0" fill="#9cdcfe"/><rect x="1847.60" y="227.21" width="8.94" height="1.0" fill="#4ec9b0"/><rect x="1835.26" y="228.71" width="8.26" height="1.0" fill="#9cdcfe"/><rect x="1844.25" y="228.71" width="3.17" height="1.0" fill="#b5cea8"/><rect x="1835.26" y="230.21" width="11.68" height="1.0" fill="#9cdcfe"/><rect x="1847.67" y="230.21" width="6.66" height="1.0" fill="#ce9178"/><rect x="1855.06" y="230.21" width="11.81" height="1.0" fill="#dcdcaa"/><rect x="1867.60" y="230.21" width="13.69" height="1.0" fill="#b5cea8"/><rect x="1835.26" y="231.72" width="7.35" height="1.0" fill="#9cdcfe"/><rect x="1843.35" y="231.72" width="7.42" height="1.0" fill="#dcdcaa"/><rect x="1851.49" y="231.72" width="13.41" height="1.0" fill="#d4d4d4"/><rect x="1834.88" y="233.22" width="5.11" height="1.0" fill="#9cdcfe"/><rect x="1840.72" y="233.22" width="1.46" height="1.0" fill="#d4d4d4"/><rect x="1842.91" y="233.22" width="2.92" height="1.0" fill="#9cdcfe"/><rect x="1845.83" y="233.22" width="0.73" height="1.0" fill="#d4d4d4"/><rect x="1846.56" y="233.22" width="1.46" height="1.0" fill="#dcdcaa"/><rect x="1848.02" y="233.22" width="0.73" height="1.0" fill="#d4d4d4"/><rect x="1848.75" y="233.22" width="4.38" height="1.0" fill="#9cdcfe"/><rect x="1853.13" y="233.22" width="0.73" height="1.0" fill="#d4d4d4"/><rect x="1853.86" y="233.22" width="5.11" height="1.0" fill="#dcdcaa"/><rect x="1858.97" y="233.22" width="0.73" height="1.0" fill="#d4d4d4"/><rect x="1859.70" y="233.22" width="2.92" height="1.0" fill="#9cdcfe"/><rect x="1862.62" y="233.22" width="1.46" height="1.0" fill="#d4d4d4"/><rect x="1864.08" y="233.22" width="0.73" height="1.0" fill="#d4d4d4"/><rect x="1864.81" y="233.22" width="2.19" height="1.0" fill="#dcdcaa"/><rect x="1867.00" y="233.22" width="2.19" height="1.0" fill="#d4d4d4"/><rect x="1869.19" y="233.22" width="2.92" height="1.0" fill="#dcdcaa"/><rect x="1872.11" y="233.22" width="1.46" height="1.0" fill="#d4d4d4"/><rect x="1829.04" y="236.23" width="6.57" height="1.0" fill="#9cdcfe"/><rect x="1836.34" y="236.23" width="1.46" height="1.0" fill="#d4d4d4"/><rect x="1838.53" y="236.23" width="3.65" height="1.0" fill="#b5cea8"/><rect x="1829.04" y="239.24" width="3.65" height="1.0" fill="#dcdcaa"/><rect x="1832.69" y="239.24" width="0.73" height="1.0" fill="#d4d4d4"/><rect x="1833.42" y="239.24" width="3.65" height="1.0" fill="#ce9178"/><rect x="1837.80" y="239.24" width="2.92" height="1.0" fill="#ce9178"/><rect x="1841.45" y="239.24" width="4.38" height="1.0" fill="#ce9178"/><rect x="1846.56" y="239.24" width="1.46" height="1.0" fill="#569cd6"/><rect x="1848.02" y="239.24" width="0.73" height="1.0" fill="#ce9178"/><rect x="1849.48" y="239.24" width="6.57" height="1.0" fill="#ce9178"/><rect x="1856.78" y="239.24" width="1.46" height="1.0" fill="#569cd6"/><rect x="1858.24" y="239.24" width="0.73" height="1.0" fill="#ce9178"/><rect x="1858.97" y="239.24" width="0.73" height="1.0" fill="#d4d4d4"/><rect x="1859.70" y="239.24" width="4.38" height="1.0" fill="#dcdcaa"/><rect x="1864.08" y="239.24" width="0.73" height="1.0" fill="#d4d4d4"/><rect x="1864.81" y="239.24" width="6.57" height="1.0" fill="#9cdcfe"/><rect x="1871.38" y="239.24" width="0.73" height="1.0" fill="#d4d4d4"/><rect x="1864.81" y="240.75" width="5.11" height="1.0" fill="#9cdcfe"/><rect x="1870.65" y="240.75" width="0.73" height="1.0" fill="#d4d4d4"/><rect x="1872.11" y="240.75" width="3.65" height="1.0" fill="#b5cea8"/><rect x="1875.76" y="240.75" width="1.46" height="1.0" fill="#d4d4d4"/><rect x="1829.04" y="243.76" width="5.11" height="1.0" fill="#9cdcfe"/><rect x="1834.15" y="243.76" width="0.73" height="1.0" fill="#d4d4d4"/><rect x="1834.88" y="243.76" width="8.03" height="1.0" fill="#ce9178"/><rect x="1842.91" y="243.76" width="0.73" height="1.0" fill="#d4d4d4"/><rect x="1843.64" y="243.76" width="0.73" height="1.0" fill="#d4d4d4"/><rect x="1844.37" y="243.76" width="4.38" height="1.0" fill="#dcdcaa"/><rect x="1848.75" y="243.76" width="0.73" height="1.0" fill="#d4d4d4"/><rect x="1849.48" y="243.76" width="6.57" height="1.0" fill="#9cdcfe"/><rect x="1856.05" y="243.76" width="0.73" height="1.0" fill="#d4d4d4"/><rect x="1829.04" y="245.26" width="5.11" height="1.0" fill="#9cdcfe"/><rect x="1834.15" y="245.26" width="0.73" height="1.0" fill="#d4d4d4"/><rect x="1834.88" y="245.26" width="7.30" height="1.0" fill="#ce9178"/><rect x="1842.18" y="245.26" width="0.73" height="1.0" fill="#d4d4d4"/><rect x="1842.91" y="245.26" width="0.73" height="1.0" fill="#d4d4d4"/><rect x="1843.64" y="245.26" width="4.38" height="1.0" fill="#dcdcaa"/><rect x="1848.02" y="245.26" width="0.73" height="1.0" fill="#d4d4d4"/><rect x="1848.75" y="245.26" width="5.11" height="1.0" fill="#9cdcfe"/><rect x="1854.59" y="245.26" width="0.73" height="1.0" fill="#d4d4d4"/><rect x="1856.05" y="245.26" width="3.65" height="1.0" fill="#b5cea8"/><rect x="1859.70" y="245.26" width="0.73" height="1.0" fill="#d4d4d4"/><rect x="1826.12" y="248.27" width="0.73" height="1.0" fill="#6a9955"/><rect x="1827.58" y="248.27" width="10.22" height="1.0" fill="#6a9955"/><rect x="1826.12" y="249.77" width="3.65" height="1.0" fill="#dcdcaa"/><rect x="1829.77" y="249.77" width="0.73" height="1.0" fill="#d4d4d4"/><rect x="1830.50" y="249.77" width="5.11" height="1.0" fill="#9cdcfe"/><rect x="1835.61" y="249.77" width="0.73" height="1.0" fill="#d4d4d4"/><rect x="1826.12" y="251.28" width="2.19" height="1.0" fill="#4ec9b0"/><rect x="1828.31" y="251.28" width="0.73" height="1.0" fill="#d4d4d4"/><rect x="1829.04" y="251.28" width="4.38" height="1.0" fill="#dcdcaa"/><rect x="1833.42" y="251.28" width="1.46" height="1.0" fill="#d4d4d4"/><rect x="1826.12" y="252.78" width="2.19" height="1.0" fill="#4ec9b0"/><rect x="1828.31" y="252.78" width="0.73" height="1.0" fill="#d4d4d4"/><rect x="1829.04" y="252.78" width="2.92" height="1.0" fill="#dcdcaa"/><rect x="1831.96" y="252.78" width="0.73" height="1.0" fill="#d4d4d4"/><rect x="1832.69" y="252.78" width="3.65" height="1.0" fill="#4ec9b0"/><rect x="1836.34" y="252.78" width="0.73" height="1.0" fill="#d4d4d4"/><rect x="1837.07" y="252.78" width="0.73" height="1.0" fill="#b5cea8"/><rect x="1837.80" y="252.78" width="0.73" height="1.0" fill="#d4d4d4"/><rect x="1839.26" y="252.78" width="3.65" height="1.0" fill="#9cdcfe"/><rect x="1842.91" y="252.78" width="0.73" height="1.0" fill="#d4d4d4"/><rect x="1843.64" y="252.78" width="0.73" height="1.0" fill="#b5cea8"/><rect x="1844.37" y="252.78" width="1.46" height="1.0" fill="#d4d4d4"/><rect x="1846.56" y="252.78" width="5.11" height="1.0" fill="#9cdcfe"/><rect x="1851.67" y="252.78" width="0.73" height="1.0" fill="#d4d4d4"/><rect x="1852.40" y="252.78" width="8.76" height="1.0" fill="#ce9178"/><rect x="1861.16" y="252.78" width="1.46" height="1.0" fill="#d4d4d4"/><rect x="1863.35" y="252.78" width="3.65" height="1.0" fill="#9cdcfe"/><rect x="1867.00" y="252.78" width="0.73" height="1.0" fill="#d4d4d4"/><rect x="1867.73" y="252.78" width="8.76" height="1.0" fill="#ce9178"/><rect x="1876.49" y="252.78" width="0.73" height="1.0" fill="#d4d4d4"/><rect x="1826.12" y="254.29" width="2.19" height="1.0" fill="#4ec9b0"/><rect x="1828.31" y="254.29" width="0.73" height="1.0" fill="#d4d4d4"/><rect x="1829.04" y="254.29" width="2.92" height="1.0" fill="#dcdcaa"/><rect x="1831.96" y="254.29" width="0.73" height="1.0" fill="#d4d4d4"/><rect x="1832.69" y="254.29" width="3.65" height="1.0" fill="#4ec9b0"/><rect x="1836.34" y="254.29" width="0.73" height="1.0" fill="#d4d4d4"/><rect x="1837.07" y="254.29" width="0.73" height="1.0" fill="#b5cea8"/><rect x="1837.80" y="254.29" width="0.73" height="1.0" fill="#d4d4d4"/><rect x="1839.26" y="254.29" width="3.65" height="1.0" fill="#9cdcfe"/><rect x="1842.91" y="254.29" width="0.73" height="1.0" fill="#d4d4d4"/><rect x="1843.64" y="254.29" width="0.73" height="1.0" fill="#b5cea8"/><rect x="1844.37" y="254.29" width="1.46" height="1.0" fill="#d4d4d4"/><rect x="1846.56" y="254.29" width="5.11" height="1.0" fill="#9cdcfe"/><rect x="1851.67" y="254.29" width="0.73" height="1.0" fill="#d4d4d4"/><rect x="1852.40" y="254.29" width="8.03" height="1.0" fill="#ce9178"/><rect x="1860.43" y="254.29" width="1.46" height="1.0" fill="#d4d4d4"/><rect x="1862.62" y="254.29" width="3.65" height="1.0" fill="#9cdcfe"/><rect x="1866.27" y="254.29" width="0.73" height="1.0" fill="#d4d4d4"/><rect x="1867.00" y="254.29" width="8.03" height="1.0" fill="#ce9178"/><rect x="1875.03" y="254.29" width="0.73" height="1.0" fill="#d4d4d4"/><rect x="1826.12" y="255.79" width="2.19" height="1.0" fill="#4ec9b0"/><rect x="1828.31" y="255.79" width="0.73" height="1.0" fill="#d4d4d4"/><rect x="1829.04" y="255.79" width="4.38" height="1.0" fill="#dcdcaa"/><rect x="1833.42" y="255.79" width="0.73" height="1.0" fill="#d4d4d4"/><rect x="1834.15" y="255.79" width="5.11" height="1.0" fill="#ce9178"/><rect x="1839.26" y="255.79" width="0.73" height="1.0" fill="#d4d4d4"/><rect x="1826.12" y="257.30" width="2.19" height="1.0" fill="#4ec9b0"/><rect x="1828.31" y="257.30" width="0.73" height="1.0" fill="#d4d4d4"/><rect x="1829.04" y="257.30" width="4.38" height="1.0" fill="#dcdcaa"/><rect x="1833.42" y="257.30" width="1.46" height="1.0" fill="#d4d4d4"/><rect x="1826.12" y="258.80" width="2.19" height="1.0" fill="#4ec9b0"/><rect x="1828.31" y="258.80" width="0.73" height="1.0" fill="#d4d4d4"/><rect x="1829.04" y="258.80" width="5.11" height="1.0" fill="#dcdcaa"/><rect x="1834.15" y="258.80" width="0.73" height="1.0" fill="#d4d4d4"/><rect x="1834.88" y="258.80" width="7.30" height="1.0" fill="#ce9178"/><rect x="1842.18" y="258.80" width="0.73" height="1.0" fill="#d4d4d4"/><rect x="1826.12" y="261.81" width="2.19" height="1.0" fill="#4ec9b0"/><rect x="1828.31" y="261.81" width="0.73" height="1.0" fill="#d4d4d4"/><rect x="1829.04" y="261.81" width="4.38" height="1.0" fill="#dcdcaa"/><rect x="1833.42" y="261.81" width="1.46" height="1.0" fill="#d4d4d4"/><rect x="1826.12" y="263.31" width="2.19" height="1.0" fill="#4ec9b0"/><rect x="1828.31" y="263.31" width="0.73" height="1.0" fill="#d4d4d4"/><rect x="1829.04" y="263.31" width="2.92" height="1.0" fill="#dcdcaa"/><rect x="1831.96" y="263.31" width="0.73" height="1.0" fill="#d4d4d4"/><rect x="1832.69" y="263.31" width="3.65" height="1.0" fill="#4ec9b0"/><rect x="1836.34" y="263.31" width="0.73" height="1.0" fill="#d4d4d4"/><rect x="1837.07" y="263.31" width="0.73" height="1.0" fill="#b5cea8"/><rect x="1837.80" y="263.31" width="0.73" height="1.0" fill="#d4d4d4"/><rect x="1839.26" y="263.31" width="3.65" height="1.0" fill="#9cdcfe"/><rect x="1842.91" y="263.31" width="0.73" height="1.0" fill="#d4d4d4"/><rect x="1843.64" y="263.31" width="0.73" height="1.0" fill="#b5cea8"/><rect x="1844.37" y="263.31" width="1.46" height="1.0" fill="#d4d4d4"/><rect x="1846.56" y="263.31" width="5.11" height="1.0" fill="#9cdcfe"/><rect x="1851.67" y="263.31" width="0.73" height="1.0" fill="#d4d4d4"/><rect x="1852.40" y="263.31" width="7.30" height="1.0" fill="#ce9178"/><rect x="1859.70" y="263.31" width="1.46" height="1.0" fill="#d4d4d4"/><rect x="1826.12" y="264.82" width="2.19" height="1.0" fill="#4ec9b0"/><rect x="1828.31" y="264.82" width="0.73" height="1.0" fill="#d4d4d4"/><rect x="1829.04" y="264.82" width="4.38" height="1.0" fill="#dcdcaa"/><rect x="1833.42" y="264.82" width="0.73" height="1.0" fill="#d4d4d4"/><rect x="1834.15" y="264.82" width="5.11" height="1.0" fill="#ce9178"/><rect x="1839.26" y="264.82" width="0.73" height="1.0" fill="#d4d4d4"/><rect x="1826.12" y="266.32" width="2.19" height="1.0" fill="#4ec9b0"/><rect x="1828.31" y="266.32" width="0.73" height="1.0" fill="#d4d4d4"/><rect x="1829.04" y="266.32" width="4.38" height="1.0" fill="#dcdcaa"/><rect x="1833.42" y="266.32" width="1.46" height="1.0" fill="#d4d4d4"/><rect x="1826.12" y="267.83" width="2.19" height="1.0" fill="#4ec9b0"/><rect x="1828.31" y="267.83" width="0.73" height="1.0" fill="#d4d4d4"/><rect x="1829.04" y="267.83" width="5.11" height="1.0" fill="#dcdcaa"/><rect x="1834.15" y="267.83" width="0.73" height="1.0" fill="#d4d4d4"/><rect x="1834.88" y="267.83" width="6.57" height="1.0" fill="#ce9178"/><rect x="1841.45" y="267.83" width="0.73" height="1.0" fill="#d4d4d4"/></g></svg>
<!-- editor vertical scrollbar -->
<div class="a" style="left:1906.5px;top:78px;width:1px;height:590px;background:#333333"></div>
<div class="a" style="left:1907px;top:491px;width:13px;height:84px;background:#424242"></div>
<div class="a" style="left:1908px;top:555.5px;width:12px;height:1px;background:#6e6e6e"></div>
<div class="a" style="left:1912px;top:555.5px;width:4px;height:4px;background:#9a9a9a"></div>

<!-- panel -->
<div class="a" style="left:232px;top:668px;width:1688px;height:1px;background:#414141"></div>
<div class="ui" style="left:252px;top:677px;font-size:10.6px;color:#9d9d9d;transform:scaleX(0.858);transform-origin:0 0">PROBLEMS</div>
<div class="ui" style="left:325px;top:677px;font-size:10.6px;color:#9d9d9d;transform:scaleX(0.87);transform-origin:0 0">OUTPUT</div>
<div class="ui" style="left:386.5px;top:677px;font-size:10.6px;color:#e7e7e7;transform:scaleX(0.867);transform-origin:0 0">TERMINAL</div>
<div class="ui" style="left:457.5px;top:677px;font-size:10.6px;color:#9d9d9d;transform:scaleX(0.87);transform-origin:0 0">DEBUG CONSOLE</div>
<div class="a" style="left:385px;top:699px;width:52px;height:1px;background:#e7e7e7"></div>
<!-- panel actions -->
<svg style="left:1727px;top:678px" width="17" height="14" viewBox="0 0 17 14"><rect x="0.6" y="0.6" width="15" height="12.4" rx="0.5" fill="none" stroke="#c5c5c5" stroke-width="1.1"/><path d="M0.6 3 H15.6" stroke="#c5c5c5" stroke-width="1"/><text x="3" y="11" font-size="6.5" font-family="Liberation Sans" fill="#c5c5c5">C:\</text></svg>
<div class="ui" style="left:1747px;top:678px;font-size:11.6px;color:#cccccc;transform:scaleX(0.917);transform-origin:0 0">python</div>
<svg style="left:1789px;top:677.5px" width="13" height="14" viewBox="0 0 13 14"><path d="M6.2 0.5 V13.5 M0 7 H12.4" stroke="#c5c5c5" stroke-width="1.2"/></svg>
<svg style="left:1806.5px;top:683px" width="9" height="6" viewBox="0 0 9 6"><path d="M0.5 0.8 L4.3 4.6 L8.1 0.8" fill="none" stroke="#c5c5c5" stroke-width="1"/></svg>
<svg style="left:1826px;top:678px" width="14" height="14" viewBox="0 0 14 14"><rect x="0.7" y="0.7" width="12.2" height="12.2" rx="1" fill="none" stroke="#c5c5c5" stroke-width="1.2"/><path d="M6.8 0.7 V12.9" stroke="#c5c5c5" stroke-width="1.2"/></svg>
<svg style="left:1851.5px;top:678px" width="11" height="14" viewBox="0 0 11 14"><path d="M0.3 2.6 H10.5 M3.4 2.6 V0.6 H7.2 V2.6 M1.5 2.6 L2.1 12.6 H8.7 L9.3 2.6 M4 4.6 V10.8 M5.4 4.6 V10.8 M6.8 4.6 V10.8" fill="none" stroke="#c5c5c5" stroke-width="1.05"/></svg>
<svg style="left:1876.5px;top:680.5px" width="11" height="7" viewBox="0 0 11 7"><path d="M0.6 6.2 L5 1.2 L9.6 6.2" fill="none" stroke="#c5c5c5" stroke-width="1.15"/></svg>
<svg style="left:1897.5px;top:680px" width="10" height="9" viewBox="0 0 10 9"><path d="M0.5 0.5 L9.2 8.3 M9.2 0.5 L0.5 8.3" stroke="#c5c5c5" stroke-width="1.15"/></svg>

<div class="tl" style="top:719.00px">Training log: 2 epoch (39808 / 60000 train. data). Loss: 0.35464659333229065</div>
<div class="tl" style="top:741.55px">Training log: 2 epoch (41088 / 60000 train. data). Loss: 0.17102715373039246</div>
<div class="tl" style="top:764.10px">Training log: 2 epoch (42368 / 60000 train. data). Loss: 0.195052832365036</div>
<div class="tl" style="top:786.65px">Training log: 2 epoch (43648 / 60000 train. data). Loss: 0.2076454758644104</div>
<div class="tl" style="top:809.20px">Training log: 2 epoch (44928 / 60000 train. data). Loss: 0.1304137259721756</div>
<div class="tl" style="top:831.75px">Training log: 2 epoch (46208 / 60000 train. data). Loss: 0.22833821177482605</div>
<div class="tl" style="top:854.30px">Training log: 2 epoch (47488 / 60000 train. data). Loss: 0.23287031054496765</div>
<div class="tl" style="top:876.85px">Training log: 2 epoch (48768 / 60000 train. data). Loss: 0.19272439181804657</div>
<div class="tl" style="top:899.40px">Training log: 2 epoch (50048 / 60000 train. data). Loss: 0.22341138124465942</div>
<div class="tl" style="top:921.95px">Training log: 2 epoch (51328 / 60000 train. data). Loss: 0.2528733015060425</div>
<div class="tl" style="top:944.50px">Training log: 2 epoch (52608 / 60000 train. data). Loss: 0.2715980112552643</div>
<div class="tl" style="top:967.05px">Training log: 2 epoch (53888 / 60000 train. data). Loss: 0.23964747786521912</div>
<!-- terminal cursor -->
<div class="a" style="left:250px;top:989px;width:10.5px;height:22.7px;border:1px solid #b4b4b4"></div>
<!-- terminal scrollbar -->
<div class="a" style="left:1902.5px;top:979px;width:9.5px;height:32px;background:#424242"></div>

<!-- status bar -->
<div id="status" class="a"></div>
<div class="a" style="left:0;top:1014px;width:27px;height:20px;background:#16825d"></div>
<svg style="left:6px;top:1017px" width="14" height="14" viewBox="0 0 14 14"><path d="M1 12 L5.5 7.5 L1 3 M12.5 1 L8.5 5 L12.5 9" fill="none" stroke="#ffffff" stroke-width="1.2"/></svg>
<div id="strip" class="a"></div>
<div class="ui" style="left:34.5px;top:1016px;font-size:11.6px;color:#ffffff;transform:scaleX(0.96);transform-origin:0 0">Python 3.8.8 64-bit ('geekTimePytorch': venv)</div>
<svg style="left:273.5px;top:1017.5px" width="13" height="13" viewBox="0 0 13 13"><circle cx="6.2" cy="6.2" r="5.5" fill="none" stroke="#fff" stroke-width="1.1"/><path d="M4 4 L8.4 8.4 M8.4 4 L4 8.4" stroke="#fff" stroke-width="1.1"/></svg>
<div class="ui" style="left:289px;top:1016px;font-size:11.6px;color:#ffffff">0</div>
<svg style="left:299px;top:1017.5px" width="13" height="13" viewBox="0 0 13 13"><path d="M5.8 0.8 L11.3 11.6 H0.4 Z M5.8 4.3 V8.3 M5.8 9.3 V10.3" fill="none" stroke="#fff" stroke-width="1.1" stroke-linejoin="round"/></svg>
<div class="ui" style="left:314.5px;top:1016px;font-size:11.6px;color:#ffffff">0</div>

<div class="ui" style="left:1584px;top:1016px;font-size:11.6px;color:#ffffff;transform:scaleX(0.92);transform-origin:0 0">Ln 120, Col 17</div>
<div class="ui" style="left:1669px;top:1016px;font-size:11.6px;color:#ffffff;transform:scaleX(0.885);transform-origin:0 0">Spaces: 4</div>
<div class="ui" style="left:1730px;top:1016px;font-size:11.6px;color:#ffffff;transform:scaleX(0.91);transform-origin:0 0">UTF-8</div>
<div class="ui" style="left:1775px;top:1016px;font-size:11.6px;color:#ffffff;transform:scaleX(0.78);transform-origin:0 0">CRLF</div>
<div class="ui" style="left:1814px;top:1016px;font-size:11.6px;color:#ffffff;transform:scaleX(0.96);transform-origin:0 0">Python</div>
<svg style="left:1865px;top:1017px" width="14" height="14" viewBox="0 0 14 14"><circle cx="5.5" cy="4.5" r="3" fill="none" stroke="#fff" stroke-width="1.1"/><path d="M0.8 12.5 Q1.5 8 5.5 8 Q9 8 10 11 M7.5 1.2 H13 V6 H10.5 L9 7.5" fill="none" stroke="#fff" stroke-width="1.1"/></svg>
<svg style="left:1893.5px;top:1017px" width="13" height="14" viewBox="0 0 13 14"><path d="M1 10.5 H11.5 L10 8.5 V5.5 Q10 1.2 6.2 1.2 Q2.5 1.2 2.5 5.5 V8.5 Z M4.8 12.2 Q6.2 13.6 7.6 12.2" fill="none" stroke="#fff" stroke-width="1.1" stroke-linejoin="round"/></svg>
</body></html>
